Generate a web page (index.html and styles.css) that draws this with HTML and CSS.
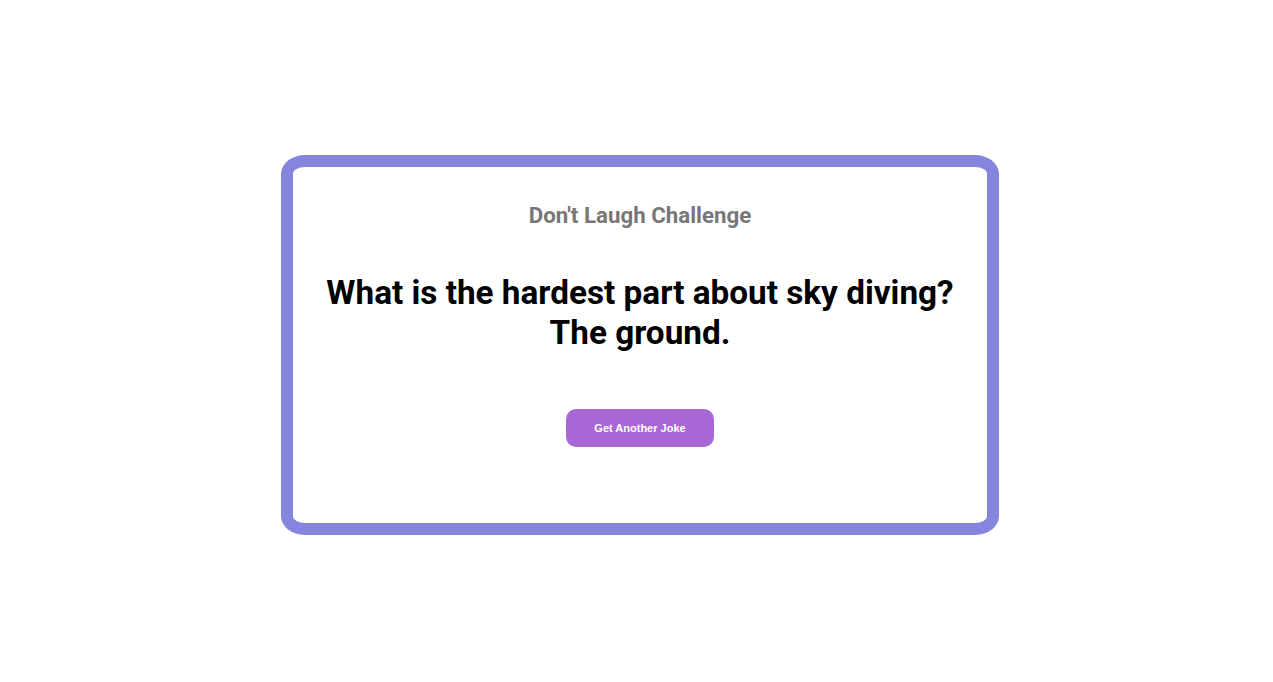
FILE: index.html
```html
<!DOCTYPE html>
<html>
<head>
<meta charset="utf-8">
<link rel="stylesheet" href="styles.css">
</head>
<body>
<div class="page">
  <div class="card">
    <h3 class="title">Don't Laugh Challenge</h3>
    <h1 class="joke">What is the hardest part about sky diving? The ground.</h1>
    <button class="btn">Get Another Joke</button>
  </div>
</div>
</body>
</html>
```
FILE: styles.css
```css
html, body {
  margin: 0;
  padding: 0;
  background: #ffffff;
}
body {
  padding: 8px 0 0 7px;
  font-family: Roboto, "Liberation Sans", sans-serif;
}
.page {
  width: calc(100vw - 7px);
  height: calc(100vh - 8px);
  display: flex;
  align-items: center;
  justify-content: center;
}
.card {
  box-sizing: border-box;
  width: 718px;
  height: 380px;
  border: 12.5px solid #8685de;
  border-radius: 24px / 19px;
  display: flex;
  flex-direction: column;
  align-items: center;
  padding: 35px 20px 0;
  text-align: center;
}
.title {
  margin: 0;
  font-size: 22.3px;
  font-weight: 700;
  color: #777777;
  line-height: 26px;
}
.joke {
  margin: 45px 0 0;
  font-size: 33.3px;
  font-weight: 700;
  line-height: 40px;
  color: #000;
  max-width: 660px;
}
.btn {
  margin-top: 56px;
  width: 148px;
  height: 38px;
  border: none;
  border-radius: 10px;
  background: #a967d6;
  color: #ffffff;
  font-family: "Liberation Sans", Arial, sans-serif;
  font-weight: 700;
  font-size: 11px;
}
```
